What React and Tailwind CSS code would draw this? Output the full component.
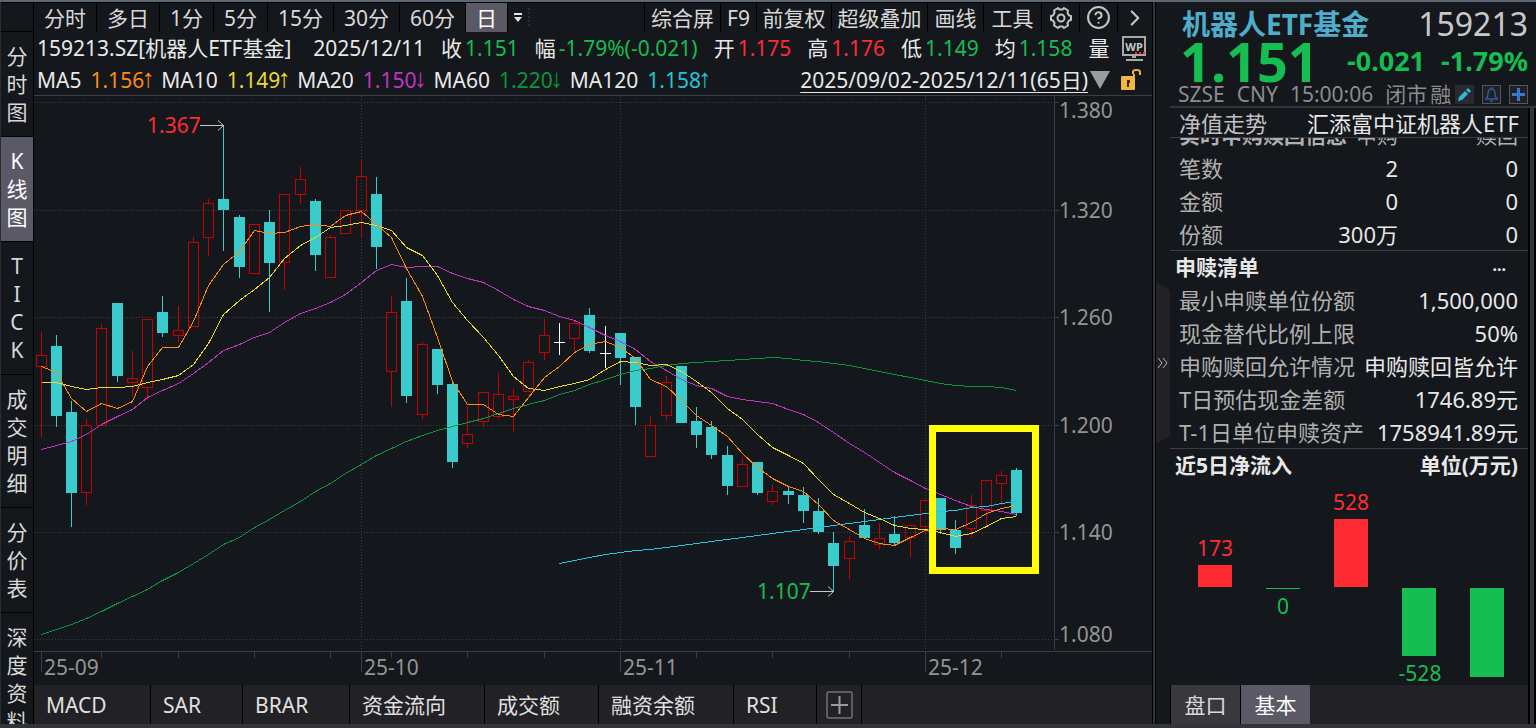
import React, { useState } from 'react';
import { Settings, CircleHelp, ChevronRight } from 'lucide-react';

const periods = [
  { name: '分时', width: 'w-[63px]' },
  { name: '多日', width: 'w-[63px]' },
  { name: '1分', width: 'w-[54px]' },
  { name: '5分', width: 'w-[54px]' },
  { name: '15分', width: 'w-[66px]' },
  { name: '30分', width: 'w-[66px]' },
  { name: '60分', width: 'w-[66px]' },
  { name: '日', width: 'w-[42px]' },
];

const tools = [
  { name: '综合屏', width: 'w-[76px]' },
  { name: 'F9', width: 'w-9' },
  { name: '前复权', width: 'w-[75px]' },
  { name: '超级叠加', width: 'w-24' },
  { name: '画线', width: 'w-14' },
  { name: '工具', width: 'w-[58px]' },
];

const views = ['分时图', 'K线图', 'TICK', '成交明细', '分价表', '深度资料'];

const quotes = [
  { label: '收', value: '1.151', color: 'text-[#16bd50]' },
  { label: '幅', value: '-1.79%(-0.021)', color: 'text-[#16bd50]' },
  { label: '开', value: '1.175', color: 'text-[#ff2b33]' },
  { label: '高', value: '1.176', color: 'text-[#ff2b33]' },
  { label: '低', value: '1.149', color: 'text-[#16bd50]' },
  { label: '均', value: '1.158', color: 'text-[#16bd50]' },
];

const averages = [
  { label: 'MA5', value: '1.156', arrow: '↑', color: 'text-[#ff8a14]' },
  { label: 'MA10', value: '1.149', arrow: '↑', color: 'text-[#ead92f]' },
  { label: 'MA20', value: '1.150', arrow: '↓', color: 'text-[#c135c1]' },
  { label: 'MA60', value: '1.220', arrow: '↓', color: 'text-[#0c963c]' },
  { label: 'MA120', value: '1.158', arrow: '↑', color: 'text-[#22c5dc]' },
];

const indicators = [
  { name: 'MACD', width: 'w-[117px]' },
  { name: 'SAR', width: 'w-[92px]' },
  { name: 'BRAR', width: 'w-[107px]' },
  { name: '资金流向', width: 'w-[135px]' },
  { name: '成交额', width: 'w-[114px]' },
  { name: '融资余额', width: 'w-[135px]' },
  { name: 'RSI', width: 'w-[83px]' },
];

// [high, body top, body bottom, low, kind]: u = up, d = down, f = flat
const candles = [
  [332, 355, 366, 437, 'u'], [335, 346, 416, 427, 'd'], [401, 412, 493, 527, 'd'], [419, 425, 492, 505, 'u'],
  [324, 328, 425, 425, 'u'], [303, 303, 376, 382, 'd'], [351, 378, 382, 396, 'u'], [319, 319, 387, 400, 'u'],
  [296, 312, 333, 337, 'd'], [306, 330, 335, 342, 'u'], [237, 242, 326, 326, 'u'], [199, 203, 237, 256, 'u'],
  [125, 199, 210, 251, 'd'], [215, 217, 267, 278, 'd'], [224, 224, 273, 273, 'u'], [210, 222, 263, 312, 'd'],
  [194, 194, 262, 290, 'u'], [167, 179, 194, 204, 'u'], [199, 201, 255, 271, 'd'], [235, 237, 277, 277, 'u'],
  [210, 210, 233, 233, 'u'], [160, 176, 210, 237, 'u'], [177, 194, 247, 269, 'd'], [296, 312, 371, 407, 'u'],
  [278, 301, 396, 403, 'd'], [342, 344, 414, 419, 'u'], [349, 349, 385, 394, 'd'], [382, 384, 462, 468, 'd'],
  [407, 434, 443, 448, 'u'], [392, 392, 421, 427, 'u'], [373, 394, 416, 419, 'u'], [389, 396, 399, 432, 'u'],
  [360, 362, 391, 391, 'u'], [319, 335, 352, 360, 'u'], [323, 342, 342, 355, 'f'], [320, 323, 338, 351, 'u'],
  [308, 315, 351, 353, 'd'], [326, 353, 353, 368, 'f'], [333, 333, 358, 385, 'd'], [357, 357, 407, 425, 'd'],
  [416, 425, 456, 457, 'u'], [376, 382, 415, 421, 'u'], [366, 366, 423, 423, 'd'], [407, 421, 435, 448, 'd'],
  [421, 427, 455, 459, 'd'], [446, 455, 486, 495, 'd'], [457, 464, 486, 487, 'u'], [462, 462, 493, 495, 'd'],
  [484, 491, 501, 505, 'u'], [486, 491, 495, 504, 'd'], [487, 495, 511, 523, 'd'], [498, 511, 532, 534, 'd'],
  [532, 543, 566, 592, 'd'], [536, 541, 558, 579, 'u'], [509, 525, 538, 538, 'd'], [523, 538, 544, 550, 'u'],
  [516, 534, 543, 546, 'd'], [525, 525, 537, 557, 'u'], [500, 500, 526, 534, 'u'], [498, 498, 530, 534, 'd'],
  [520, 530, 548, 554, 'd'], [495, 505, 528, 538, 'u'], [480, 480, 510, 527, 'u'], [471, 475, 483, 505, 'u'],
  [468, 470, 513, 516, 'd'],
];

const lines = [
  {
    name: 'MA20', color: '#c135c1', start: 0,
    values: [449, 445, 441, 434, 424, 416, 409, 397, 390, 383, 373, 362, 350, 344, 337, 332, 322, 313, 308, 302, 294, 282, 270, 264, 267, 266, 266, 273, 278, 282, 290, 299, 306, 310, 316, 320, 327, 335, 341, 349, 361, 370, 379, 385, 388, 396, 399, 401, 403, 409, 414, 422, 432, 443, 452, 462, 472, 480, 488, 494, 500, 506, 509, 511, 514],
  },
  {
    name: 'MA60', color: '#0c963c', start: 0,
    values: [634, 629, 624, 618, 611, 603, 596, 589, 580, 572, 563, 554, 544, 537, 527, 519, 510, 501, 491, 483, 473, 464, 455, 448, 441, 435, 430, 426, 422, 418, 413, 408, 404, 400, 394, 390, 384, 379, 374, 370, 368, 365, 363, 362, 361, 360, 359, 358, 357, 358, 360, 361, 363, 365, 368, 371, 374, 377, 380, 383, 385, 386, 386, 387, 390],
  },
  {
    name: 'MA120', color: '#22c5dc', start: 34,
    values: [563, 560, 557, 554, 552, 550, 549, 547, 545, 543, 541, 539, 537, 535, 533, 531, 529, 527, 525, 523, 521, 519, 517, 515, 513, 511, 510, 507, 506, 503, 501],
  },
  {
    name: 'MA10', color: '#ead92f', start: 0,
    values: [382, 382, 386, 389, 387, 387, 386, 382, 379, 375, 364, 343, 314, 300, 289, 277, 258, 245, 237, 227, 225, 222, 225, 230, 247, 255, 275, 302, 320, 337, 355, 376, 388, 390, 386, 383, 379, 369, 361, 362, 365, 364, 371, 381, 392, 408, 419, 434, 447, 455, 463, 479, 494, 503, 512, 518, 525, 528, 529, 532, 536, 533, 526, 518, 516],
  },
  {
    name: 'MA5', color: '#ff8a14', start: 0,
    values: [366, 372, 398, 411, 403, 408, 401, 366, 347, 347, 321, 285, 264, 251, 230, 233, 232, 226, 224, 226, 215, 211, 224, 237, 268, 296, 337, 381, 404, 404, 414, 416, 397, 377, 366, 352, 344, 341, 347, 358, 379, 386, 400, 415, 425, 436, 453, 467, 478, 486, 491, 504, 520, 529, 538, 543, 545, 537, 530, 528, 529, 522, 513, 508, 505],
  },
];

const priceAxis = [
  { y: 102, label: '1.380', base: 118 },
  { y: 210, label: '1.320', base: 218 },
  { y: 317, label: '1.260', base: 325 },
  { y: 425, label: '1.200', base: 433 },
  { y: 532, label: '1.140', base: 540 },
  { y: 639, label: '1.080', base: 642 },
];

const months = [
  { x: 41, label: '25-09' },
  { x: 361, label: '25-10' },
  { x: 620, label: '25-11' },
  { x: 925, label: '25-12' },
];

const weeks = [101, 178, 254, 330, 391, 467, 544, 696, 772, 849, 1001];

const subscriptions = [
  ['笔数', '2', '0'],
  ['金额', '0', '0'],
  ['份额', '300万', '0'],
];

const redemptionList = [
  ['最小申赎单位份额', '1,500,000'],
  ['现金替代比例上限', '50%'],
  ['申购赎回允许情况', '申购赎回皆允许'],
  ['T日预估现金差额', '1746.89元'],
  ['T-1日单位申赎资产', '1758941.89元'],
];

const xAt = (i) => 41 + Math.floor(i * 15.246);

const Candle = ({ x, data }) => {
  const [high, top, bottom, low, kind] = data;
  if (kind === 'f') {
    return (
      <path d={`M${x + 0.5} ${high}V${low}M${x - 5} ${top + 0.5}h11`} stroke="#fff" fill="none" />
    );
  }
  if (kind === 'd') {
    return (
      <g fill="#3acccc">
        <rect x={x} y={high} width="1" height={low - high} />
        <rect x={x - 5} y={top} width="11" height={bottom - top} />
      </g>
    );
  }
  return (
    <g>
      <path d={`M${x + 0.5} ${high}V${top}M${x + 0.5} ${bottom}V${low}`} stroke="#c80000" />
      <rect x={x - 4.5} y={top + 0.5} width="10" height={bottom - top} fill="none" stroke="#c80000" />
    </g>
  );
};

const PriceChart = () => (
  <svg
    viewBox="34 96 1118 589"
    preserveAspectRatio="xMinYMin meet"
    className="block w-full flex-1 min-h-0"
    fontSize="21"
    role="img"
    aria-label="日K线"
  >
    <g shapeRendering="crispEdges" fill="none" stroke="#3c3d42">
      {priceAxis.map(({ y }) => (
        <g key={y}>
          <path d={`M34 ${y + 0.5}H1054`} strokeDasharray="1 2" />
          <path d={`M1054 ${y + 0.5}h5`} />
        </g>
      ))}
      {months.map(({ x }) => (
        <g key={x}>
          {x > 41 && <path d={`M${x + 0.5} 96V651`} strokeDasharray="1 2" />}
          <path d={`M${x + 0.5} 651V672`} />
        </g>
      ))}
      {weeks.map((x) => (
        <path key={x} d={`M${x + 0.5} 651V658`} />
      ))}
      <path d="M34 651.5H1152M1054.5 96V650" />
    </g>

    <g fill="#949494">
      {priceAxis.map(({ label, base }) => (
        <text key={label} x="1059" y={base}>{label}</text>
      ))}
      {months.map(({ x, label }) => (
        <text key={label} x={x + 3} y="675">{label}</text>
      ))}
    </g>

    <g shapeRendering="crispEdges">
      {candles.map((data, i) => (
        <Candle key={i} x={xAt(i)} data={data} />
      ))}
      {lines.map((line) => (
        <polyline
          key={line.name}
          fill="none"
          stroke={line.color}
          points={line.values.map((y, i) => `${xAt(i + line.start) + 0.5},${y + 0.5}`).join(' ')}
        />
      ))}
    </g>

    <g fill="none" stroke="#c8c8c8">
      <path d="M200 125.5H223M218 120.5L223.5 125.5L218 130.5" />
      <path d="M810 591.5H833M828 586.5L833.5 591.5L828 596.5" />
    </g>
    <text x="147" y="133" fill="#ff2b33">1.367</text>
    <text x="757" y="599" fill="#16bd50">1.107</text>

    <rect x="932.5" y="428.5" width="103" height="142" fill="none" stroke="#ffff00" strokeWidth="7" />
  </svg>
);

const FlowChart = () => (
  <svg
    viewBox="1170 481 358 204"
    preserveAspectRatio="xMidYMin meet"
    className="block w-full flex-1 min-h-0"
    fontSize="21"
    textAnchor="middle"
    role="img"
    aria-label="近5日净流入"
  >
    <g fill="#ff2b33">
      <rect x="1198" y="565" width="34" height="22" />
      <rect x="1334" y="519" width="34" height="68" />
      <text x="1215" y="556">173</text>
      <text x="1351" y="510">528</text>
    </g>
    <g fill="#16bd50">
      <rect x="1266" y="588" width="34" height="1" />
      <rect x="1402" y="588" width="34" height="68" />
      <rect x="1470" y="588" width="34" height="89" />
      <text x="1283" y="614">0</text>
      <text x="1420" y="681">-528</text>
    </g>
  </svg>
);

const Toolbar = ({ period, onSelect }) => (
  <div className="flex flex-1 text-[#d8d8d8]">
    {periods.map(({ name, width }) => (
      <button
        key={name}
        onClick={() => onSelect(name)}
        className={`${width} ${period === name ? 'bg-[#5a5965] text-white' : ''} h-full shrink-0 border-r border-black`}
      >
        {name}
      </button>
    ))}
    <button aria-label="更多周期" className="w-5 h-full flex items-center justify-center">
      <svg width="10" height="10" viewBox="0 0 10 10" fill="#e4e4e4">
        <path d="M1 0h8v2H1zM1 4h8L5 9z" />
      </svg>
    </button>
    <svg width="2" height="29" className="shrink-0" aria-hidden="true">
      <path d="M1 5V25" stroke="#45464c" strokeWidth="1" strokeDasharray="2 2" />
    </svg>
    <div className="flex-1 border-r border-black" />
    {tools.map(({ name, width }) => (
      <button key={name} className={`${width} h-full shrink-0 border-r border-black whitespace-nowrap`}>{name}</button>
    ))}
    <button aria-label="设置" className="w-[38px] flex items-center justify-center border-r border-black">
      <svg width="24" height="24" viewBox="0 0 24 24" fill="none" stroke="#c4c4c4" strokeWidth="2" strokeLinejoin="round">
        <path d="M9 2L10.500 3.500H13.500L15 2L19 4.500L18.500 7L20 9.500L22 10V14L20 14.500L18.500 17L19 19.500L15 22L13.500 20.500H10.500L9 22L5 19.500L5.500 17L4 14.500L2 14V10L4 9.500L5.500 7L5 4.500Z" />
        <circle cx="12" cy="12" r="3.500" />
      </svg>
    </button>
    <button aria-label="帮助" className="w-[38px] flex items-center justify-center border-r border-black">
      <CircleHelp size={25} strokeWidth={2} color="#c4c4c4" />
    </button>
    <button aria-label="展开" className="w-[34px] flex items-center justify-center">
      <ChevronRight size={26} strokeWidth={2} color="#c4c4c4" />
    </button>
  </div>
);

const QuoteRow = () => (
  <div className="h-8 flex items-center pl-[3px] pr-[3px] text-[#e8e8e8] whitespace-nowrap">
    <span>159213.SZ[机器人ETF基金]</span>
    <span className="ml-[22px]">2025/12/11</span>
    <div className="ml-4 flex gap-4">
      {quotes.map(({ label, value, color }) => (
        <span key={label} className="flex gap-[3px]">
          {label}
          <span className={color}>{value}</span>
        </span>
      ))}
      <span>量</span>
    </div>
    <svg className="ml-auto shrink-0" width="28" height="28" viewBox="0 0 28 28" fill="none">
      <rect x="2" y="3" width="22" height="18" stroke="#a8a8a8" strokeWidth="2" />
      <path d="M11 21h4v3h-4zM5 25h17v2H5z" fill="#a8a8a8" />
      <text x="13" y="17" fontSize="11" fontWeight="700" textAnchor="middle" fill="#c8c8c8">WP</text>
      <path d="M14 19h12" stroke="#ff2b33" strokeWidth="2" strokeDasharray="2 2" />
    </svg>
  </div>
);

const AverageRow = () => (
  <div className="h-8 flex items-center pl-[3px] pr-[6px] border-b border-[#3c3d42] text-[#e8e8e8] whitespace-nowrap">
    <div className="flex gap-[9px]">
      {averages.map(({ label, value, arrow, color }) => (
        <React.Fragment key={label}>
          <span>{label}</span>
          <span className={`${color} flex`}>
            {value}
            <span className="w-2 flex justify-center font-['Liberation_Mono'] text-[26px] leading-7">{arrow}</span>
          </span>
        </React.Fragment>
      ))}
    </div>
    <a href="#range" className="ml-auto underline underline-offset-4 decoration-1">2025/09/02-2025/12/11(65日)</a>
    <button aria-label="选择区间" className="ml-[2px]">
      <svg width="20" height="20" viewBox="0 0 20 20"><path d="M0 1h20L10 19z" fill="#9c9c9c" /></svg>
    </button>
    <button aria-label="解锁" className="ml-[10px]">
      <svg width="26" height="24" viewBox="0 0 26 24" fill="none">
        <path d="M14 8V6M13 6V4q0-2 3-2h1q3 0 3 2v3" stroke="#eeb23e" strokeWidth="2" />
        <rect x="1" y="8" width="14" height="14" rx="1" fill="#f2b646" />
        <path d="M7 12h3v3H9v4H7z" fill="#3a2c10" />
      </svg>
    </button>
  </div>
);

const SectionHead = ({ title, children }) => (
  <div className="h-[33px] shrink-0 flex items-center justify-between pl-[5px] pr-[10px] border-t border-[#3c3d42] text-[21px] font-bold text-[#e8e8e8]">
    <h3>{title}</h3>
    {children}
  </div>
);

const QuotePanel = () => (
  <header className="h-[104px] shrink-0 pt-[6px] pr-2 whitespace-nowrap">
    <div className="h-8 pl-3 flex items-center justify-between leading-8">
      <h1 className="text-[28px] font-bold text-[#4faccb]">机器人ETF基金</h1>
      <span className="text-[32px] text-[#c8c8c8]">159213</span>
    </div>
    <div className="h-[42px] pl-[10px] flex items-center justify-between font-bold leading-[42px] text-[#16bd50]">
      <span className="text-[54px]">1.151</span>
      <span className="flex gap-4 text-[27px]">
        <span>-0.021</span>
        <span>-1.79%</span>
      </span>
    </div>
    <div className="h-6 pl-2 flex items-center leading-6 text-[#8c8c8c]">
      <span>SZSE</span>
      <span className="ml-3">CNY</span>
      <span className="ml-3">15:00:06</span>
      <span className="ml-3">闭市</span>
      <span className="ml-[3px]">融</span>
      <div className="ml-auto flex gap-2">
        <button aria-label="编辑" className="size-[19px] bg-[#2a2b30] flex items-center justify-center">
          <svg width="15" height="15" viewBox="0 0 15 15" fill="#2fb8d8">
            <path d="M1 14l1-4 6-6 3 3-6 6zM9 3l2-2 3 3-2 2z" />
          </svg>
        </button>
        <button aria-label="提醒" className="size-[19px] border border-[#55565c] bg-[#202126] flex items-center justify-center">
          <svg width="15" height="15" viewBox="0 0 15 15" fill="none" stroke="#2c5a9c" strokeWidth="1.500">
            <path d="M1 12h13M2 12q2-2 2-5 0-5 3.500-5T11 7q0 3 2 5M6 14h3M7.500 0v2" />
          </svg>
        </button>
        <button aria-label="添加" className="size-[19px] border border-[#55565c] bg-[#202126] flex items-center justify-center">
          <svg width="13" height="13" viewBox="0 0 13 13" fill="#3a78c8">
            <path d="M5 0h3v5h5v3H8v5H5V8H0V5h5z" />
          </svg>
        </button>
      </div>
    </div>
  </header>
);

const FundDetails = () => (
  <div className="flex-1 min-h-0 flex flex-col overflow-hidden text-[22px]">
    <div className="h-[30px] shrink-0 flex items-center justify-between px-[9px] border-b border-[#3c3d42] whitespace-nowrap">
      <span className="text-[#c0c0c0]">净值走势</span>
      <span className="text-[#e8e8e8]">汇添富中证机器人ETF</span>
    </div>
    <div className="shrink-0 overflow-hidden">
      <table className="-mt-5 w-full table-fixed text-[#e8e8e8]">
        <thead className="text-[21px]">
          <tr className="h-[33px] text-[#b0b0b0] whitespace-nowrap">
            <th className="pl-[9px] text-left font-bold w-[184px]">实时申购赎回信息</th>
            <th className="text-right font-normal w-11">申购</th>
            <th className="pr-[10px] text-right font-normal">赎回</th>
          </tr>
        </thead>
        <tbody>
          {subscriptions.map(([label, buy, sell]) => (
            <tr key={label} className="h-[33px]">
              <td className="pl-[9px] text-[#b0b0b0]">{label}</td>
              <td className="text-right whitespace-nowrap">
                <span className="flex justify-end">{buy}</span>
              </td>
              <td className="pr-[10px] text-right">{sell}</td>
            </tr>
          ))}
        </tbody>
      </table>
    </div>
    <SectionHead title="申赎清单">
      <button aria-label="更多" className="pr-3 pb-1 text-base">...</button>
    </SectionHead>
    <table className="w-full text-[#e8e8e8] whitespace-nowrap">
      <tbody>
        {redemptionList.map(([label, value]) => (
          <tr key={label} className="h-[33px]">
            <td className="pl-[9px] text-[#b0b0b0]">{label}</td>
            <td className="pr-[10px] text-right">{value}</td>
          </tr>
        ))}
      </tbody>
    </table>
    <SectionHead title="近5日净流入">
      <span>单位(万元)</span>
    </SectionHead>
    <FlowChart />
  </div>
);

const App = () => {
  const [period, setPeriod] = useState('日');
  const [view, setView] = useState('K线图');
  const [panel, setPanel] = useState('基本');

  return (
    <div className="h-screen flex flex-col overflow-hidden bg-[#14171b] text-[21px] leading-7 font-['Noto_Sans','Noto_Sans_CJK_SC',sans-serif]">
      <div className="h-[2px] shrink-0 bg-[#5d6875]" />
      <div className="flex-1 min-h-0 flex border-l border-[#2c2d33]">
        <main className="flex-1 min-w-0 flex flex-col">
          <div className="h-[30px] shrink-0 flex border-t border-black">
            <div className="w-[33px] shrink-0 border-r border-b border-black" />
            <Toolbar period={period} onSelect={setPeriod} />
          </div>
          <div className="flex-1 min-h-0 flex">
            <nav className="w-[33px] shrink-0 flex flex-col overflow-hidden border-r border-black">
              {views.map((name) => (
                <button
                  key={name}
                  onClick={() => setView(name)}
                  className={`${view === name ? 'bg-[#5a5965] text-white' : 'text-[#d8d8d8]'} w-full shrink-0 py-[10px] border-b border-black flex flex-col items-center`}
                >
                  {name.split('').map((char, i) => (
                    <span key={i}>{char}</span>
                  ))}
                </button>
              ))}
            </nav>
            <section className="flex-1 min-w-0 flex flex-col">
              <QuoteRow />
              <AverageRow />
              <PriceChart />
              <div className="h-[39px] shrink-0 flex bg-[#222126] text-[#e0e0e0]">
                {indicators.map(({ name, width }) => (
                  <button key={name} className={`${width} pl-3 text-left border-r border-black whitespace-nowrap`}>
                    {name}
                  </button>
                ))}
                <button aria-label="添加指标" className="w-[45px] flex items-center justify-center border-r border-black">
                  <svg width="28" height="28" viewBox="0 0 28 28" fill="none" stroke="#9a9a9a">
                    <rect x="2" y="1" width="25" height="26" rx="1" strokeWidth="1" />
                    <path d="M6 14h17M14.500 5v18" strokeWidth="2" />
                  </svg>
                </button>
              </div>
            </section>
          </div>
        </main>

        <div className="w-1 shrink-0 border-x border-black bg-[#33333a]" />

        <aside className="w-[380px] shrink-0 flex">
          <button aria-label="收起" className="w-[14px] shrink-0 flex items-center">
            <svg width="14" height="162" viewBox="0 0 14 162" fill="none">
              <path d="M0 0L14 8V154L0 162z" fill="#222126" />
              <path d="M2 76l4 5-4 5M7 76l4 5-4 5" stroke="#b8b8b8" />
            </svg>
          </button>
          <div className="flex-1 min-w-0 flex flex-col">
            <QuotePanel />
            <div className="flex-1 min-h-0 flex border-t-2 border-[#33333a]">
              <div className="flex-1 min-w-0 flex flex-col">
                <FundDetails />
                <div className="h-[39px] shrink-0 flex bg-[#222126]">
                  {['盘口', '基本'].map((name) => (
                    <button
                      key={name}
                      onClick={() => setPanel(name)}
                      className={`${panel === name ? 'bg-[#5a5965] text-white' : 'bg-[#39383d] text-[#d8d8d8]'} w-[70px] border-l border-black`}
                    >
                      {name}
                    </button>
                  ))}
                </div>
              </div>
              <div className="w-2 shrink-0 border-x-2 border-black bg-[#33333a]" />
            </div>
          </div>
        </aside>
      </div>
      <div className="h-1 shrink-0 bg-[#33333a]" />
    </div>
  );
};

export default App;
